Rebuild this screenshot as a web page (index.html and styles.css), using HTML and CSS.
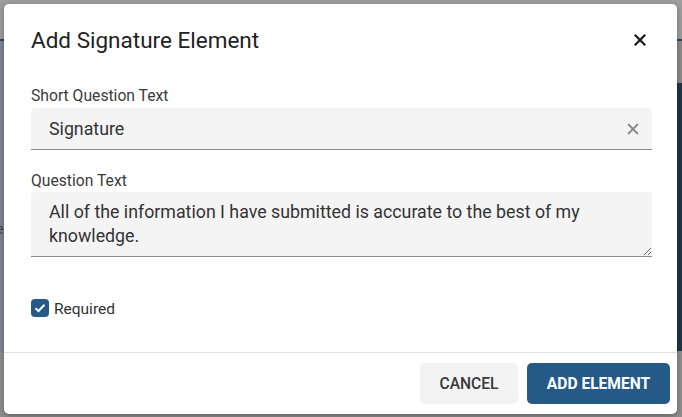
FILE: index.html
```html
<!DOCTYPE html>
<html lang="en">
<head>
<meta charset="utf-8">
<title>Add Signature Element</title>
<link rel="stylesheet" href="styles.css">
</head>
<body>
<div class="page">
  <div class="page-top"></div>
  <div class="page-main">
    <div class="page-left"><span class="page-letter">e</span></div>
    <div class="page-center"></div>
    <div class="page-right"></div>
  </div>
</div>
<div class="overlay">
  <div class="modal" role="dialog" aria-labelledby="dlg-title">
    <header class="modal-header">
      <h2 class="modal-title" id="dlg-title">Add Signature Element</h2>
      <button class="close-btn" aria-label="Close">
        <svg width="12" height="12" viewBox="0 0 12 12"><path d="M1.5 1.5 L10.5 10.5 M10.5 1.5 L1.5 10.5" stroke="#1a1a1a" stroke-width="2.2" stroke-linecap="square"/></svg>
      </button>
    </header>
    <div class="modal-body">
      <label class="field-label" for="short">Short Question Text</label>
      <div class="text-field">
        <input id="short" class="text-input" type="text" value="Signature">
        <button class="clear-btn" aria-label="Clear">
          <svg width="12" height="12" viewBox="0 0 12 12"><path d="M1 1 L11 11 M11 1 L1 11" stroke="#8a8a8a" stroke-width="1.8"/></svg>
        </button>
      </div>
      <label class="field-label second" for="qtext">Question Text</label>
      <textarea id="qtext" class="text-area" rows="2">All of the information I have submitted is accurate to the best of my knowledge.</textarea>
      <label class="check-row">
        <span class="check-box">
          <svg width="12" height="10" viewBox="0 0 12 10"><path d="M1.5 5.2 L4.5 8 L10.5 1.8" fill="none" stroke="#fff" stroke-width="2"/></svg>
        </span>
        <span class="check-text">Required</span>
      </label>
    </div>
    <footer class="modal-footer">
      <button class="btn btn-secondary">CANCEL</button>
      <button class="btn btn-primary">ADD ELEMENT</button>
    </footer>
  </div>
</div>
</body>
</html>
```
FILE: styles.css
```css
html, body {
  margin: 0;
  padding: 0;
  width: 682px;
  height: 417px;
  overflow: hidden;
  font-family: Roboto, "Liberation Sans", sans-serif;
}
body {
  position: relative;
  background: #8e8e8e;
}
.page {
  display: flex;
  flex-direction: column;
  height: 100%;
}
.page-top {
  height: 39px;
  background: #9e9e9e;
  border-bottom: 2px solid #34485e;
}
.page-main {
  display: flex;
  height: 310px;
}
.page-left {
  width: 4px;
  background: #7e8692;
  overflow: hidden;
  position: relative;
}
.page-letter {
  position: absolute;
  left: -4px;
  top: 180px;
  color: #444;
  font-size: 14px;
}
.page-center {
  flex: 1;
}
.page-right {
  width: 6px;
  background: #1f3549;
  border-top: 42px solid #8f8a86;
}
.overlay {
  position: absolute;
  inset: 0;
}
.modal {
  position: absolute;
  left: 4px;
  top: 4px;
  width: 673px;
  height: 410px;
  background: #fff;
  border-radius: 5px;
  box-shadow: 0 2px 6px rgba(0,0,0,0.3);
  display: flex;
  flex-direction: column;
  box-sizing: border-box;
}
.modal-header {
  display: flex;
  align-items: center;
  justify-content: space-between;
  padding: 20px 29px 0 27px;
  height: 32px;
  box-sizing: content-box;
}
.modal-title {
  margin: 0;
  font-size: 22.5px;
  font-weight: 400;
  line-height: 32px;
  color: #222;
}
.close-btn {
  border: 0;
  background: transparent;
  padding: 0;
  width: 16px;
  height: 16px;
  display: flex;
  align-items: center;
  justify-content: center;
}
.modal-body {
  flex: 1;
  display: flex;
  flex-direction: column;
  padding: 30px 25px 0 27px;
}
.field-label {
  font-size: 15.7px;
  line-height: 20px;
  color: #3b3b3b;
  margin-bottom: 2px;
}
.field-label.second {
  margin-top: 21px;
  margin-bottom: 1px;
}
.text-field {
  display: flex;
  align-items: center;
  height: 41px;
  background: #f4f4f4;
  border-bottom: 1px solid #8d8d8d;
  border-radius: 4px 4px 0 0;
}
.text-input {
  flex: 1;
  border: 0;
  background: transparent;
  font-family: inherit;
  font-size: 17.8px;
  color: #333;
  padding: 0 0 0 18px;
  outline: none;
  height: 41px;
}
.clear-btn {
  border: 0;
  background: transparent;
  padding: 0;
  width: 12px;
  height: 12px;
  margin-right: 13px;
  display: flex;
}
.text-area {
  display: block;
  width: 100%;
  height: 65px;
  box-sizing: border-box;
  border: 0;
  border-bottom: 1px solid #8d8d8d;
  border-radius: 4px 4px 0 0;
  background: #f4f4f4;
  font-family: inherit;
  font-size: 17.8px;
  line-height: 24px;
  color: #333;
  padding: 8px 16px 8px 18px;
  resize: vertical;
  outline: none;
}
.check-row {
  display: flex;
  align-items: center;
  gap: 5px;
  margin-top: 41px;
}
.check-box {
  width: 18px;
  height: 18px;
  border-radius: 4px;
  background: #255a87;
  display: flex;
  align-items: center;
  justify-content: center;
}
.check-text {
  font-size: 15.5px;
  color: #333;
  padding-top: 2px;
}
.modal-footer {
  display: flex;
  justify-content: flex-end;
  gap: 9px;
  padding: 10px 7px 10px 0;
  border-top: 1px solid #e0e0e0;
}
.btn {
  height: 41px;
  border: 0;
  border-radius: 5px;
  font-family: inherit;
  font-size: 15.6px;
  padding: 0 18px;
}
.btn-secondary {
  background: #f3f3f3;
  color: #383838;
  font-weight: 500;
  width: 98px;
}
.btn-primary {
  background: #255a87;
  color: #fff;
  font-weight: 700;
  width: 143px;
}
```
